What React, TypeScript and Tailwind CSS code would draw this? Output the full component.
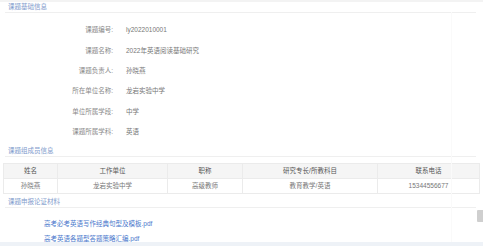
import React from "react";

const info = [
    { label: "课题编号:", value: "ly2022010001" },
    { label: "课题名称:", value: "2022年英语阅读基础研究" },
    { label: "课题负责人:", value: "孙晓燕" },
    { label: "所在单位名称:", value: "龙岩实验中学" },
    { label: "单位所属学段:", value: "中学" },
    { label: "课题所属学科:", value: "英语" },
];

const heads = ["姓名", "工作单位", "职称", "研究专长/所教科目", "联系电话"];
const member = ["孙晓燕", "龙岩实验中学", "高级教师", "教育教学/英语", "15344556677"];

const files = ["高考必考英语写作经典句型及模板.pdf", "高考英语各题型答题策略汇编.pdf"];

function SectionTitle({ title, className = "" }: { title: string; className?: string }) {
    return (
        <div className={className}>
            <div className="h-[10px] px-[8px] flex items-center text-[6.5px] text-[#7f9bcc]">{title}</div>
            <div className="ml-[5px] mr-[7px] h-[1px] bg-[#efefef]" />
        </div>
    );
}

export default function App() {
    return (
        <div
            className="relative w-[483px] h-[246px] overflow-hidden bg-white"
            style={{ fontFamily: '"Liberation Sans", "Noto Sans CJK SC", sans-serif' }}
        >
            <div className="h-[2px] bg-[#f3f3f3]" />

            <SectionTitle title="课题基础信息" />

            <div className="pt-[7px]">
                {info.map((row) => (
                    <div key={row.label} className="h-[20.4px] flex items-center text-[6.5px]">
                        <div className="w-[113px] text-right text-[#888]">{row.label}</div>
                        <div className="pl-[13px] text-[#777]">{row.value}</div>
                    </div>
                ))}
            </div>

            <SectionTitle title="课题组成员信息" className="mt-[3.6px]" />

            <div className="mx-[3px] mt-[6px] border border-[#ebebeb] text-[6.5px]">
                <div className="grid grid-cols-[53px_110px_75px_135px_1fr] h-[15px] bg-[#f5f5f5] border-b border-[#ebebeb]">
                    {heads.map((h, i) => (
                        <div
                            key={h}
                            className={`flex items-center justify-center text-[#555] ${i > 0 ? "border-l border-[#ebebeb]" : ""}`}
                        >
                            {h}
                        </div>
                    ))}
                </div>
                <div className="grid grid-cols-[53px_110px_75px_135px_1fr] h-[14px]">
                    {member.map((m, i) => (
                        <div
                            key={i}
                            className={`flex items-center justify-center text-[#777] ${i > 0 ? "border-l border-[#ebebeb]" : ""}`}
                        >
                            {m}
                        </div>
                    ))}
                </div>
            </div>

            <SectionTitle title="课题申报论证材料" className="mt-[3px]" />

            <div className="mt-[8px] pl-[44px]">
                {files.map((f) => (
                    <div key={f} className="h-[15px] flex items-center text-[6.5px] text-[#4a78cc]">
                        {f}
                    </div>
                ))}
            </div>

            {/* back to top button peeking in */}
            <div className="absolute left-[477px] top-[210px] w-[8px] h-[12px] rounded-[1px] bg-[#cfcfcf]" />
            <div className="absolute left-[451px] top-[12px] bottom-0 w-[1px] bg-[#fafafa]" />
            <div className="absolute left-0 right-0 bottom-0 h-[4px] bg-[#eef2f7]" />
        </div>
    );
}
